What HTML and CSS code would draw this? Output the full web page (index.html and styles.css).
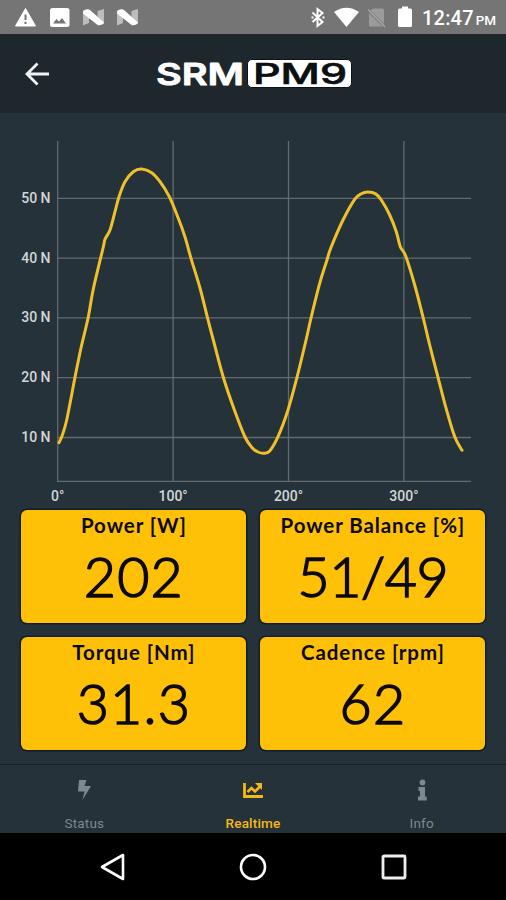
FILE: index.html
```html
<!DOCTYPE html>
<html lang="en">
<head>
    <meta charset="UTF-8">
    <meta name="viewport" content="width=device-width, initial-scale=1.0">
    <title>SRM PM9</title>
    <link rel="stylesheet" href="styles.css">
</head>
<body>

    <!-- System status bar -->
    <div id="status-bar">
        <svg class="notifications" width="150" height="34" viewBox="0 0 150 34">
            <path d="M25.5 8.5 L35.5 26 H15.5 Z" fill="#fff" stroke="#fff" stroke-linejoin="round"/>
            <path d="M25.5 14.5 v5.5 M25.5 21.7 v2.2" stroke="#757575" stroke-width="2"/>
            <rect x="50" y="8" width="19.5" height="19" rx="2.5" fill="#fff"/>
            <path d="M53 23.5 l3.5 -4.5 2.5 2.5 3 -3.5 4 5.5 z" fill="#757575"/>
            <g id="n-logo">
                <path d="M83 10.5 l6 -1 V23 l-6 2.5 z M97.5 11 l6.500 -2 V24 l-6.500 1.500 z" fill="#bdbdbd"/>
                <path d="M83 11.500 q3 -3.500 7 -1.500 L104 22.500 q-3 4 -7 2 L83 13.500 z" fill="#fff"/>
            </g>
            <use href="#n-logo" x="34"/>
        </svg>
        <svg class="system" width="112" height="34" viewBox="306 0 112 34">
            <path d="M312.5 12.500 L322.500 22 L317.500 26 V9 L322.500 13 L312.500 22" fill="none" stroke="#fff" stroke-width="2"/>
            <path d="M311.500 17.500 h2 M322.500 17.500 h2" stroke="#fff" stroke-width="2"/>
            <path d="M334 12 Q346.500 3.500 359 12 L346.500 27 Z" fill="#fff"/>
            <path d="M373 8.500 h9 q2 0 2 2 V24 L370.500 10.500 z M369 13 V26.500 h13.500 z" fill="#9b9b9b"/>
            <path d="M368 9.500 L385 27" stroke="#a6a6a6" stroke-width="1.500"/>
            <path d="M402 6.500 h6 v2 h2.500 q1.500 0 1.500 1.500 v15.500 q0 1.500 -1.500 1.500 h-11 q-1.500 0 -1.500 -1.500 V10 q0 -1.500 1.500 -1.500 h2.500 z" fill="#fff"/>
        </svg>
        <span class="time">12:47</span>
        <span class="ampm">PM</span>
    </div>

    <!-- App header -->
    <div id="header">
        <svg class="back" width="26" height="26" viewBox="0 0 26 26">
            <path d="M13.500 2.500 L3 13 L13.500 23.500 M3 13 H25" fill="none" stroke="#f2f2f2" stroke-width="2.800"/>
        </svg>
        <svg class="logo" width="200" height="34" viewBox="0 0 200 34">
            <text class="brand" x="1" y="27.500" textLength="88" lengthAdjust="spacingAndGlyphs">SRM</text>
            <rect x="92.500" y="2.500" width="104" height="28" rx="4.500" fill="#fff" stroke="#0c1317"/>
            <text class="model" x="98" y="27" textLength="94" lengthAdjust="spacingAndGlyphs">PM9</text>
        </svg>
    </div>

    <!-- Force over crank angle -->
    <svg id="chart" width="506" height="396" viewBox="0 113 506 396">
        <g id="grid"></g>
        <path id="curve"/>
    </svg>

    <!-- Live values -->
    <div id="values">
        <div class="card">
            <div class="label">Power [W]</div>
            <div class="number">202</div>
        </div>
        <div class="card">
            <div class="label">Power Balance [%]</div>
            <div class="number balance">51/49</div>
        </div>
        <div class="card">
            <div class="label">Torque [Nm]</div>
            <div class="number">31.3</div>
        </div>
        <div class="card">
            <div class="label">Cadence [rpm]</div>
            <div class="number">62</div>
        </div>
    </div>

    <!-- Tabs -->
    <div id="tabs">
        <div class="tab">
            <svg width="24" height="24" viewBox="0 0 24 24">
                <path d="M7 2 h7.500 l-2 6 h6.500 L10.500 22 l2 -8.500 H6 z" fill="currentColor"/>
            </svg>
            <span>Status</span>
        </div>
        <div class="tab active">
            <svg width="24" height="24" viewBox="0 0 24 24">
                <path d="M3.500 5 V18.500 H22" fill="none" stroke="currentColor" stroke-width="2.800"/>
                <path d="M6.500 14 L10.500 10 L14 13.500 L19 8.500" fill="none" stroke="currentColor" stroke-width="2.600"/>
                <path d="M14 5 h7 v7 z" fill="currentColor"/>
            </svg>
            <span>Realtime</span>
        </div>
        <div class="tab">
            <svg width="24" height="24" viewBox="0 0 24 24">
                <circle cx="12.500" cy="4.500" r="2.900" fill="currentColor"/>
                <path d="M8.500 9 h6.500 v9.500 h1.700 v4 H8 v-4 h2 v-5.500 h-1.500 z" fill="currentColor"/>
            </svg>
            <span>Info</span>
        </div>
    </div>

    <!-- System navigation -->
    <div id="nav-bar">
        <svg width="28" height="28" viewBox="0 0 28 28">
            <path d="M24 2 V26 L3 14 Z" fill="none" stroke="#fff" stroke-width="2.600" stroke-linejoin="round"/>
        </svg>
        <svg width="28" height="28" viewBox="0 0 28 28">
            <circle cx="14" cy="14" r="12" fill="none" stroke="#fff" stroke-width="2.600"/>
        </svg>
        <svg width="28" height="28" viewBox="0 0 28 28">
            <rect x="3" y="3" width="22" height="22" rx="1" fill="none" stroke="#eee" stroke-width="2.800"/>
        </svg>
    </div>

    <script src="chart.js"></script>
</body>
</html>
```
FILE: styles.css
```css
body {
    margin: 0;
    width: 506px;
    height: 900px;
    overflow: hidden;
    display: flex;
    flex-direction: column;
    background: #263239;
    font-family: Roboto, sans-serif;
}
svg {
    display: block;
    flex-shrink: 0;
}
#status-bar {
    height: 34px;
    display: flex;
    background: #757575;
    color: white;
    line-height: 37px;
}
.system {
    margin-left: 156px;
}
.time {
    margin-left: 4px;
    font-size: 20px;
    font-weight: 500;
    letter-spacing: 0.2px;
}
.ampm {
    margin-left: 2px;
    padding-top: 2px;
    font-size: 13.5px;
    font-weight: 500;
}
#header {
    height: 79px;
    display: flex;
    align-items: center;
    background: #1e282c;
}
.back {
    margin-left: 24px;
}
.logo {
    margin-left: 105px;
}
.brand, .model {
    font-family: Inter, sans-serif;
    font-size: 30px;
    font-weight: 600;
    fill: white;
    stroke: white;
    stroke-width: 0.8;
    stroke-linejoin: round;
}
.model {
    font-size: 28.5px;
    font-weight: 500;
    fill: #0a0f12;
    stroke: #0a0f12;
    stroke-width: 0.6;
}
#grid line {
    stroke: #626c70;
    stroke-width: 1.3;
}
#grid text {
    font-size: 14px;
    font-weight: 500;
    fill: #d3d6d8;
}
#curve {
    fill: none;
    stroke: #f0c02a;
    stroke-width: 3;
    stroke-linecap: round;
}
#values {
    display: grid;
    grid-template-columns: 225px 225px;
    grid-auto-rows: 113px;
    gap: 14px;
    padding: 0.5px 20px 0 21.4px;
    height: 254.5px;
}
.card {
    border-radius: 6px;
    background: #ffc107;
    box-shadow: 0 0 0 1.5px #101c2a;
    color: #0c0a02;
    text-align: center;
    font-family: Lato, sans-serif;
}
.label {
    height: 31px;
    line-height: 30px;
    font-size: 20.5px;
    font-weight: bold;
    letter-spacing: 0.9px;
}
/* light weight with a thin outline, for round stroke ends */
.number {
    line-height: 69px;
    font-size: 55.5px;
    font-weight: 300;
    letter-spacing: 1.2px;
    -webkit-text-stroke: 1.6px #0c0a02;
    stroke-linejoin: round;
}
.balance {
    letter-spacing: -0.4px;
}
#tabs {
    height: 68px;
    display: flex;
    border-top: 1px solid #18232a;
}
.tab {
    flex: 1;
    display: flex;
    flex-direction: column;
    align-items: center;
    padding-top: 13px;
    color: #7f888c;
    font-size: 13.5px;
    letter-spacing: 0.2px;
}
.tab span {
    margin-top: 13px;
    line-height: 16px;
}
.active {
    color: #f4b916;
    font-weight: 500;
}
#nav-bar {
    flex: 1;
    display: flex;
    justify-content: center;
    align-items: center;
    gap: 112.5px;
    background: black;
}
```
FILE: chart.js
```js
const grid = document.getElementById("grid");
let marks = "";

// Horizontal lines, one per 10 N, and the base line
for (let n = 10; n <= 50; n += 10) {
    let y = 497.3 - n * 5.98;
    marks += `<line x1="57" x2="471" y1="${y}" y2="${y}"/>`;
    marks += `<text x="50.500" y="${y + 4.5}" text-anchor="end">${n} N</text>`;
}
marks += `<line x1="57" x2="471" y1="481.300" y2="481.300"/>`;

// Vertical lines, one per 100 degrees
for (let deg = 0; deg <= 300; deg += 100) {
    let x = 57.7 + deg * 1.154;
    marks += `<line x1="${x}" x2="${x}" y1="141" y2="481"/>`;
    marks += `<text x="${x}" y="501" text-anchor="middle">${deg}°</text>`;
}
grid.innerHTML = marks;

const points = [
    [59, 442.7], [62, 436], [66.7, 420], [75, 377.3], [81, 348], [88.3, 317], [93.3, 289],
    [103.3, 247], [105, 239.3], [110, 230], [115, 211.7], [119, 196.7], [125, 181.7],
    [133.3, 171.7], [141.7, 169], [151.7, 172.7], [160, 181.7], [169.3, 196.7],
    [178.3, 218.3], [185, 237], [191, 258.3], [200, 288], [207.3, 317],
    [213.3, 340], [223.3, 377.3], [233.3, 407], [245, 437], [252.7, 448.3], [258, 452],
    [263.7, 453.3], [269.7, 451], [278, 436.7], [288, 410], [297, 377.3], [306.3, 339],
    [311, 318], [319.7, 283.3], [327, 260], [330.8, 248], [343, 220], [354.7, 199.3],
    [361.3, 193.7], [368, 192], [375.7, 193.9], [381.3, 200], [389.7, 215], [396.3, 231.7],
    [400.3, 246.7], [405.7, 256], [414.7, 285], [423, 317], [429.7, 345],
    [438, 377.3], [444.7, 403.3], [453, 431.7], [457, 441.7], [462, 450.3]
];

// Smooth curve through all the points
let d = "M" + points[0];
for (let i = 0; i < points.length - 1; i++) {
    let p0 = points[i - 1] || points[i];
    let p1 = points[i];
    let p2 = points[i + 1];
    let p3 = points[i + 2] || p2;
    let c1 = [p1[0] + (p2[0] - p0[0]) / 6, p1[1] + (p2[1] - p0[1]) / 6];
    let c2 = [p2[0] - (p3[0] - p1[0]) / 6, p2[1] - (p3[1] - p1[1]) / 6];
    d += "C" + c1 + " " + c2 + " " + p2;
}
document.getElementById("curve").setAttribute("d", d);
```
